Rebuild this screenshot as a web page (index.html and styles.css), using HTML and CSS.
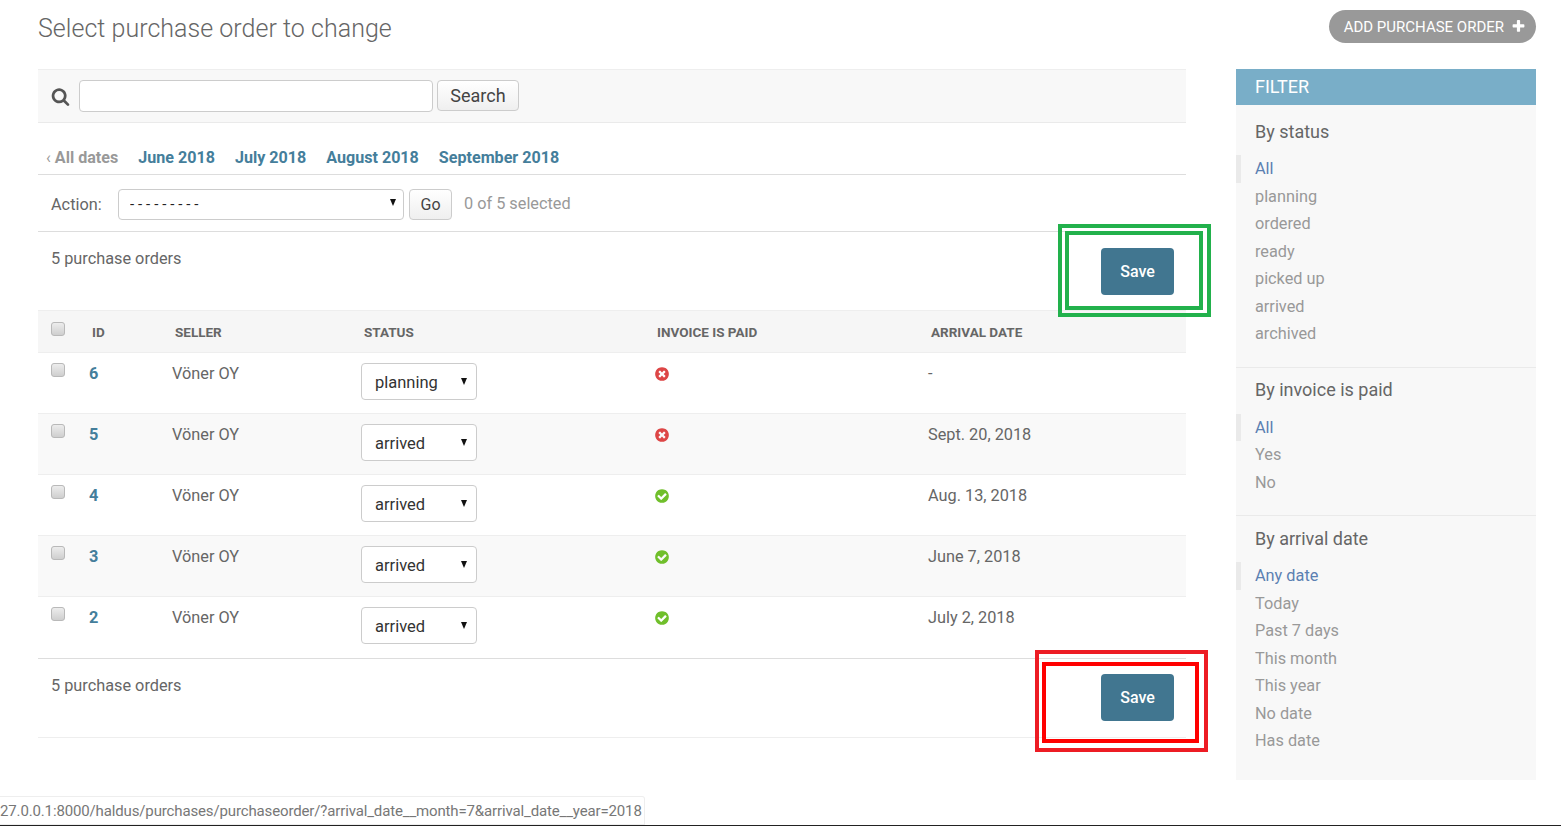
FILE: index.html
```html
<!DOCTYPE html>
<html lang="en">
<head>
<meta charset="utf-8">
<title>Select purchase order to change</title>
<link rel="stylesheet" href="styles.css">
</head>
<body>
<div class="page">
  <header class="top">
    <h1 class="title">Select purchase order to change</h1>
    <a class="add-btn">ADD PURCHASE ORDER
      <svg class="add-icon" viewBox="0 0 1792 1792"><path fill="#fff" d="M1600 736v192q0 40-28 68t-68 28h-416v416q0 40-28 68t-68 28h-192q-40 0-68-28t-28-68v-416h-416q-40 0-68-28t-28-68v-192q0-40 28-68t68-28h416v-416q0-40 28-68t68-28h192q40 0 68 28t28 68v416h416q40 0 68 28t28 68z"/></svg>
    </a>
  </header>
  <div class="main">
    <section class="content">
      <div class="search-bar">
        <svg class="search-icon" viewBox="0 0 1792 1792"><path fill="#555" d="M1216 832q0-185-131.500-316.500t-316.500-131.500-316.500 131.500-131.500 316.500 131.500 316.500 316.500 131.500 316.500-131.500 131.500-316.500zm512 832q0 52-38 90t-90 38q-54 0-90-38l-343-342q-179 124-399 124-143 0-273.500-55.500t-225-150-150-225-55.500-273.500 55.500-273.500 150-225 225-150 273.500-55.500 273.500 55.500 225 150 150 225 55.500 273.500q0 220-124 399l343 343q37 37 37 90z"/></svg>
        <input class="search-input" type="text">
        <button class="btn search-btn">Search</button>
      </div>
      <div class="dates">
        <span class="date-back"><span class="chev">‹</span> All dates</span>
        <a class="date-link">June 2018</a>
        <a class="date-link">July 2018</a>
        <a class="date-link">August 2018</a>
        <a class="date-link">September 2018</a>
      </div>
      <div class="actions">
        <span class="action-label">Action:</span>
        <span class="select-wrap action-select"><select class="select"><option>---------</option></select></span>
        <button class="btn go-btn">Go</button>
        <span class="selected-count">0 of 5 selected</span>
      </div>
      <div class="paginator">
        <span class="count">5 purchase orders</span>
        <button class="save">Save</button>
      </div>
      <table class="results">
        <colgroup><col class="c-cb"><col class="c-id"><col class="c-seller"><col class="c-status"><col class="c-paid"><col class="c-date"></colgroup>
        <thead>
          <tr><th><input class="check" type="checkbox"></th><th>ID</th><th>SELLER</th><th>STATUS</th><th>INVOICE IS PAID</th><th>ARRIVAL DATE</th></tr>
        </thead>
        <tbody>
          <tr>
            <td><input class="check" type="checkbox"></td><td class="id">6</td><td>Vöner OY</td>
            <td><span class="select-wrap"><select class="select"><option>planning</option></select></span></td>
            <td><svg class="bool" viewBox="0 0 1792 1792"><path fill="#dd4646" d="M1277 1122q0-26-19-45l-181-181 181-181q19-19 19-45 0-27-19-46l-90-90q-19-19-46-19-26 0-45 19l-181 181-181-181q-19-19-45-19-27 0-46 19l-90 90q-19 19-19 46 0 26 19 45l181 181-181 181q-19 19-19 45 0 27 19 46l90 90q19 19 46 19 26 0 45-19l181-181 181 181q19 19 45 19 27 0 46-19l90-90q19-19 19-46zm387-226q0 209-103 385.500t-279.500 279.500-385.500 103-385.500-103-279.500-279.500-103-385.500 103-385.500 279.500-279.500 385.500-103 385.500 103 279.500 279.500 103 385.500z"/></svg></td>
            <td>-</td>
          </tr>
          <tr class="alt">
            <td><input class="check" type="checkbox"></td><td class="id">5</td><td>Vöner OY</td>
            <td><span class="select-wrap"><select class="select"><option>arrived</option></select></span></td>
            <td><svg class="bool" viewBox="0 0 1792 1792"><path fill="#dd4646" d="M1277 1122q0-26-19-45l-181-181 181-181q19-19 19-45 0-27-19-46l-90-90q-19-19-46-19-26 0-45 19l-181 181-181-181q-19-19-45-19-27 0-46 19l-90 90q-19 19-19 46 0 26 19 45l181 181-181 181q-19 19-19 45 0 27 19 46l90 90q19 19 46 19 26 0 45-19l181-181 181 181q19 19 45 19 27 0 46-19l90-90q19-19 19-46zm387-226q0 209-103 385.500t-279.500 279.500-385.500 103-385.500-103-279.500-279.500-103-385.500 103-385.500 279.500-279.500 385.500-103 385.500 103 279.500 279.500 103 385.500z"/></svg></td>
            <td>Sept. 20, 2018</td>
          </tr>
          <tr>
            <td><input class="check" type="checkbox"></td><td class="id">4</td><td>Vöner OY</td>
            <td><span class="select-wrap"><select class="select"><option>arrived</option></select></span></td>
            <td><svg class="bool" viewBox="0 0 1792 1792"><path fill="#70bf2b" d="M1412 734q0-28-18-46l-91-90q-19-19-45-19t-45 19l-408 407-226-226q-19-19-45-19t-45 19l-91 90q-18 18-18 46 0 27 18 45l362 362q19 19 45 19 27 0 46-19l543-543q18-18 18-45zm252 162q0 209-103 385.500t-279.500 279.500-385.500 103-385.500-103-279.500-279.500-103-385.500 103-385.500 279.500-279.500 385.500-103 385.500 103 279.500 279.500 103 385.500z"/></svg></td>
            <td>Aug. 13, 2018</td>
          </tr>
          <tr class="alt">
            <td><input class="check" type="checkbox"></td><td class="id">3</td><td>Vöner OY</td>
            <td><span class="select-wrap"><select class="select"><option>arrived</option></select></span></td>
            <td><svg class="bool" viewBox="0 0 1792 1792"><path fill="#70bf2b" d="M1412 734q0-28-18-46l-91-90q-19-19-45-19t-45 19l-408 407-226-226q-19-19-45-19t-45 19l-91 90q-18 18-18 46 0 27 18 45l362 362q19 19 45 19 27 0 46-19l543-543q18-18 18-45zm252 162q0 209-103 385.500t-279.500 279.500-385.500 103-385.500-103-279.500-279.500-103-385.500 103-385.500 279.500-279.500 385.500-103 385.500 103 279.500 279.500 103 385.500z"/></svg></td>
            <td>June 7, 2018</td>
          </tr>
          <tr>
            <td><input class="check" type="checkbox"></td><td class="id">2</td><td>Vöner OY</td>
            <td><span class="select-wrap"><select class="select"><option>arrived</option></select></span></td>
            <td><svg class="bool" viewBox="0 0 1792 1792"><path fill="#70bf2b" d="M1412 734q0-28-18-46l-91-90q-19-19-45-19t-45 19l-408 407-226-226q-19-19-45-19t-45 19l-91 90q-18 18-18 46 0 27 18 45l362 362q19 19 45 19 27 0 46-19l543-543q18-18 18-45zm252 162q0 209-103 385.500t-279.500 279.500-385.500 103-385.500-103-279.500-279.500-103-385.500 103-385.500 279.500-279.500 385.500-103 385.500 103 279.500 279.500 103 385.500z"/></svg></td>
            <td>July 2, 2018</td>
          </tr>
        </tbody>
      </table>
      <div class="paginator paginator-bottom">
        <span class="count">5 purchase orders</span>
        <button class="save">Save</button>
      </div>
    </section>
    <aside class="filter">
      <h2 class="filter-title">FILTER</h2>
      <div class="filter-group first">
        <h3 class="filter-h">By status</h3>
        <ul class="filter-list">
          <li class="on">All</li><li>planning</li><li>ordered</li><li>ready</li><li>picked up</li><li>arrived</li><li>archived</li>
        </ul>
      </div>
      <div class="filter-group middle">
        <h3 class="filter-h">By invoice is paid</h3>
        <ul class="filter-list">
          <li class="on">All</li><li>Yes</li><li>No</li>
        </ul>
      </div>
      <div class="filter-group last">
        <h3 class="filter-h">By arrival date</h3>
        <ul class="filter-list">
          <li class="on">Any date</li><li>Today</li><li>Past 7 days</li><li>This month</li><li>This year</li><li>No date</li><li>Has date</li>
        </ul>
      </div>
    </aside>
  </div>
</div>
<div class="frame green-outer"></div>
<div class="frame green-inner"></div>
<div class="frame red-outer"></div>
<div class="frame red-inner"></div>
<div class="status-bar">27.0.0.1:8000/haldus/purchases/purchaseorder/?arrival_date__month=7&amp;arrival_date__year=2018</div>
<div class="bottom-line"></div>
</body>
</html>
```
FILE: styles.css
```css
* { box-sizing: border-box; }
html, body { margin: 0; height: 826px; overflow: hidden; }
body { position: relative; background: #fff; font-family: Roboto, "Liberation Sans", sans-serif; font-size: 16.3px; color: #666; }
.page { padding: 0 25px 0 38px; }
.top { display: flex; justify-content: space-between; height: 69px; padding-top: 10px; }
.title { margin: 1px 0 0; font-size: 25px; font-weight: 300; line-height: 36px; color: #666; letter-spacing: .03px; }
.add-btn { display: flex; align-items: center; gap: 7px; height: 33px; padding: 0 10px 0 15px; border-radius: 17px; background: #999; color: #fff; font-size: 15px; font-weight: 400; }
.add-icon { width: 15px; height: 15px; }
.main { display: flex; gap: 50px; align-items: flex-start; }
.content { width: 1148px; }
.search-bar { display: flex; align-items: flex-start; height: 54px; padding: 10px 0 0 13px; background: #f8f8f8; border-top: 1px solid #eee; border-bottom: 1px solid #eaeaea; }
.search-icon { width: 19px; height: 19px; margin: 7px 9px 0 0; }
.search-input { width: 354px; height: 32px; border: 1px solid #ccc; border-radius: 4px; background: #fff; }
.btn { border: 1px solid #ccc; border-radius: 4px; background: linear-gradient(#fff, #efefef); font-family: inherit; color: #444; padding: 0; }
.search-btn { width: 82px; height: 31px; margin-left: 4px; font-size: 18px; }
.dates { display: flex; gap: 20px; height: 52px; padding: 25px 0 0 8px; border-bottom: 1px solid #ddd; font-size: 16.1px; font-weight: 700; line-height: 20px; }
.date-back { color: #999; }
.chev { font-weight: 400; }
.date-link { color: #447e9b; }
.actions { display: flex; align-items: center; height: 57px; padding: 2px 0 0 13px; border-bottom: 1px solid #ddd; }
.action-label { width: 67px; color: #666; }
.select-wrap { position: relative; display: inline-block; width: 116px; height: 37px; }
.select-wrap::after { content: ""; position: absolute; right: 10px; top: 15px; border-left: 3.5px solid transparent; border-right: 3.5px solid transparent; border-top: 7px solid #111; pointer-events: none; }
.select { appearance: none; display: block; width: 100%; height: 100%; padding: 2px 0 0 13px; border: 1px solid #ccc; border-radius: 4px; background: #fff; font-family: inherit; font-size: 16.5px; color: #333; }
.action-select { width: 286px; height: 31px; }
.action-select::after { top: 10px; right: 8px; }
.action-select .select { padding: 0 0 0 11px; font-size: 15px; letter-spacing: 3.9px; color: #222; }
.go-btn { width: 43px; height: 31px; margin-left: 5px; font-size: 16px; }
.selected-count { margin: -2px 0 0 12px; color: #999; }
.paginator { display: flex; justify-content: space-between; align-items: flex-start; padding: 16px 12px 15px 13px; }
.paginator-bottom { padding: 15px 12px 16px 13px; border-top: 1px solid #ddd; border-bottom: 1px solid #eee; }
.count { margin-top: 1px; line-height: 20px; color: #666; }
.paginator-bottom .count { margin-top: 2px; }
.save { width: 73px; height: 47px; border: 0; border-radius: 4px; background: #417690; color: #fff; font-family: inherit; font-size: 16px; font-weight: 500; }
.paginator-bottom .save { padding-top: 2px; }
.results { width: 1148px; table-layout: fixed; border-collapse: collapse; }
.c-cb { width: 41px; } .c-id { width: 83px; } .c-seller { width: 189px; } .c-status { width: 293px; } .c-paid { width: 274px; } .c-date { width: 268px; }
.results th { height: 42px; padding: 0 0 0 13px; background: #f6f6f6; border-top: 1px solid #eee; border-bottom: 1px solid #eee; text-align: left; font-size: 13.5px; font-weight: 700; color: #666; }
.results td { height: 61px; padding: 11px 0 0 10px; vertical-align: top; border-bottom: 1px solid #eee; line-height: 20px; color: #666; }
.results td:first-child { padding-left: 13px; padding-top: 10px; }
.results td:nth-child(4) { padding-top: 10px; }
.results td:nth-child(5) { padding-top: 10px; }
.results th:first-child { padding-bottom: 6px; }
.results tbody tr:last-child td { border-bottom: 0; }
.alt td { background: #f9f9f9; }
.id { font-weight: 700; color: #447e9b !important; }
.check { appearance: none; display: block; width: 14px; height: 14px; margin: 0; border: 1px solid #b9b9b9; border-radius: 3px; background: linear-gradient(#ededed, #cfcfcf); }
.bool { display: block; width: 16px; height: 16px; margin-top: 3px; }
.filter { width: 300px; background: #f8f8f8; }
.filter-title { margin: 0; height: 36px; padding-left: 19px; background: #79aec8; color: #fff; font-size: 18px; font-weight: 400; line-height: 36px; }
.filter-group { padding: 11px 0 19px; border-bottom: 1px solid #eaeaea; }
.filter-group.first { padding-top: 16px; }
.filter-group.middle .filter-h { margin-bottom: 13px; }
.filter-group.last { padding: 12px 0 25px; border-bottom: 0; }
.filter-h { margin: 0 0 12px 19px; font-size: 18px; font-weight: 400; line-height: 22px; color: #666; }
.filter-list { margin: 0; padding: 0; list-style: none; }
.filter-list li { height: 27.5px; padding-left: 19px; line-height: 27.5px; color: #999; }
.filter-list li.on { padding-left: 14px; border-left: 5px solid #eaeaea; color: #5b80b2; }
.frame { position: absolute; border-style: solid; border-width: 4px; }
.green-outer { left: 1058px; top: 224px; width: 153px; height: 93px; border-color: #22b14c; }
.green-inner { left: 1065px; top: 231px; width: 138px; height: 79px; border-color: #22b14c; }
.red-outer { left: 1035px; top: 650px; width: 173px; height: 102px; border-color: #ed1c24; }
.red-inner { left: 1042px; top: 662px; width: 157px; height: 81px; border-color: #ff0000; }
.status-bar { position: absolute; left: 0; top: 796px; width: 645px; height: 29px; padding-top: 4px; background: #fff; border: 1px solid #eee; border-left: 0; border-radius: 0 3px 0 0; font-size: 15px; letter-spacing: -.14px; line-height: 20px; color: #777; white-space: nowrap; overflow: hidden; }
.bottom-line { position: absolute; left: 0; right: 0; top: 825px; height: 1px; background: #222; }
```
